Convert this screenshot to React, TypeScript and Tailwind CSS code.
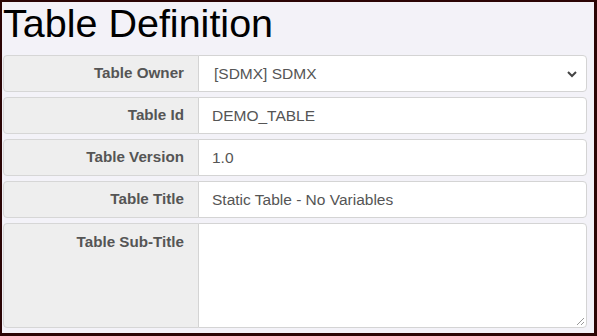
import React from "react";

const labelCls =
  "w-[196px] shrink-0 bg-[#eeeeee] border border-[#d6d6d6] rounded-l-[4px] text-right pr-[14px] text-[15.2px] font-bold text-[#555555]";

function Row({ label, children }: { label: string; children: React.ReactNode }) {
  return (
    <div className="flex h-[37px]">
      <div className={labelCls + " flex items-center justify-end"}>{label}</div>
      <div className="flex-1 -ml-px bg-white border border-[#d4d4d4] rounded-r-[4px] flex items-center pl-[13px] text-[15.5px] text-[#555555]">
        {children}
      </div>
    </div>
  );
}

export default function App() {
  return (
    <div
      className="w-[597px] h-[336px] bg-[#2b0505] pt-[2px] pl-[2px] pr-[3px] pb-[3px]"
      style={{ fontFamily: '"Liberation Sans", Arial, sans-serif' }}
    >
      <div className="w-full h-full bg-[#f3f2f8] flex flex-col pl-px pr-[7px]">
        <h1 className="text-[39.5px] leading-[42px] text-black m-0 font-normal">Table Definition</h1>
        <div className="mt-[11px] flex flex-col gap-[5px]">
          <div className="flex h-[37px]">
            <div className={labelCls + " flex items-center justify-end"}>Table Owner</div>
            <div className="flex-1 -ml-px bg-white border border-[#d4d4d4] rounded-r-[4px] flex items-center pl-[15px] pr-[8px] text-[15.5px] text-[#555555]">
              <span className="flex-1">[SDMX] SDMX</span>
              <svg width="12" height="8" viewBox="0 0 12 8">
                <path d="M2 2 L6 6 L10 2" fill="none" stroke="#444" strokeWidth="2" />
              </svg>
            </div>
          </div>
          <Row label="Table Id">DEMO_TABLE</Row>
          <Row label="Table Version">1.0</Row>
          <Row label="Table Title">Static Table - No Variables</Row>
          <div className="flex h-[105px]">
            <div className={labelCls + " pt-[7px]"}>Table Sub-Title</div>
            <div className="flex-1 -ml-px bg-white border border-[#d4d4d4] rounded-r-[4px] relative">
              <svg className="absolute right-[1px] bottom-[1px]" width="10" height="10" viewBox="0 0 10 10">
                <path d="M9 2 L2 9 M9 6 L6 9" stroke="#999" strokeWidth="1" />
              </svg>
            </div>
          </div>
        </div>
      </div>
    </div>
  );
}
